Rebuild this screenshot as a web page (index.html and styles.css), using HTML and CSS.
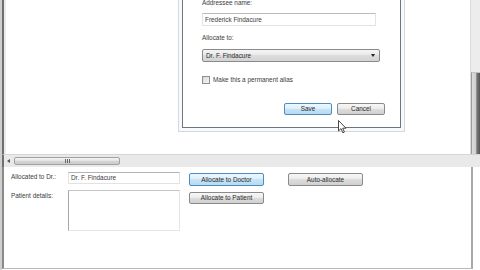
FILE: index.html
```html
<!DOCTYPE html>
<html>
<head>
<meta charset="utf-8">
<link rel="stylesheet" href="styles.css">
</head>
<body>
<div class="screen">
  <div class="upper">
    <div class="canvas"></div>
    <div class="vscroll"><div class="vthumb"></div></div>
  </div>
  <div class="hscroll">
    <span class="harrow"></span>
    <div class="hthumb"><span class="grip"></span></div>
  </div>
  <div class="lower">
    <div class="form">
      <span class="lbl">Allocated to Dr.:</span>
      <div class="field">Dr. F. Findacure</div>
      <div class="cell c1"><button class="btn default">Allocate to Doctor</button></div>
      <div class="cell c2"><button class="btn">Auto-allocate</button></div>
      <span class="lbl lbl2">Patient details:</span>
      <div class="area"></div>
      <div class="cell c1"><button class="btn btn2">Allocate to Patient</button></div>
    </div>
  </div>

  <div class="dlg-frame">
    <div class="dlg">
      <div class="dlbl first">Addressee name:</div>
      <div class="dfield">Frederick Findacure</div>
      <div class="dlbl second">Allocate to:</div>
      <div class="combo"><span>Dr. F. Findacure</span><span class="caret"></span></div>
      <div class="check"><span class="box"></span><span>Make this a permanent alias</span></div>
      <div class="dbtns">
        <button class="btn dbtn default">Save</button>
        <button class="btn dbtn">Cancel</button>
      </div>
    </div>
  </div>

  <svg class="cursor" width="10" height="14" viewBox="0 0 10 14">
    <path d="M0.5 0.5 L0.5 11 L3 8.6 L4.8 12.8 L6.4 12.1 L4.7 8.2 L8 8.2 Z" fill="#fff" stroke="#333" stroke-width="0.9" stroke-linejoin="round"/>
  </svg>
</div>
</body>
</html>
```

FILE: styles.css
```css
* { box-sizing: border-box; }
html, body { margin: 0; padding: 0; }
body {
  width: 480px;
  height: 270px;
  overflow: hidden;
  background: #fff;
  font-family: "Liberation Sans", Arial, sans-serif;
  font-size: 6.4px;
  color: #3c3c3c;
}
.screen {
  position: relative;
  width: 480px;
  height: 270px;
  display: flex;
  flex-direction: column;
  border-left: 2px solid #cfcfcf;
  overflow: hidden;
}
.upper {
  height: 154px;
  display: flex;
  border-left: 2px solid #707070;
}
.canvas {
  flex: 1;
  background: #fff;
  border-left: 2px solid #ececec;
}
.vscroll {
  width: 10px;
  background: #ededed;
  border-left: 1px solid #dadada;
  display: flex;
  flex-direction: column;
}
.vthumb {
  margin-top: 72px;
  flex: 1;
  border-left: 1px solid #9c9c9c;
  border-top: 1px solid #c4c4c4;
  background: linear-gradient(to right, #dcdcdc 0, #cfcfcf 45%, #7a7a7a 60%, #555 100%);
}
.hscroll {
  height: 13px;
  background: #e9e9e9;
  border-top: 1px solid #d6d6d6;
  border-left: 2px solid #707070;
  display: flex;
  align-items: center;
  padding-left: 3px;
}
.harrow {
  width: 0;
  height: 0;
  border-top: 2px solid transparent;
  border-bottom: 2px solid transparent;
  border-right: 3px solid #555;
}
.hthumb {
  margin-left: 4px;
  width: 106px;
  height: 8px;
  border: 1px solid #a2a2a2;
  border-radius: 2px;
  background: linear-gradient(#f4f4f4, #e2e2e2 50%, #d4d4d4 51%, #cbcbcb);
  display: flex;
  align-items: center;
  justify-content: center;
}
.grip {
  width: 5px;
  height: 4px;
  background: repeating-linear-gradient(to right, #666 0, #666 1px, transparent 1px, transparent 2px);
}
.lower {
  flex: 1;
  margin-right: 7px;
  margin-bottom: 1px;
  border-left: 2px solid #8a8a8a;
  border-right: 2px solid #a9a9a9;
  border-bottom: 1px solid #b8b8b8;
  background: #fff;
}
.form {
  display: grid;
  grid-template-columns: 57px 112px 84px 99px;
  grid-template-rows: 13px 43px;
  row-gap: 5px;
  padding-top: 5px;
  padding-left: 7px;
}
.lbl {
  line-height: 8px;
  margin-top: 1px;
  white-space: nowrap;
}
.lbl2 { margin-top: 2px; }
.field {
  height: 12px;
  border: 1px solid #e2e2e2;
  border-top-color: #b3b3b3;
  padding-left: 2px;
  line-height: 10px;
  white-space: nowrap;
}
.area {
  height: 41px;
  border: 1px solid #e6e6e6;
  border-top-color: #c6c6c6;
  border-left-color: #a6a6a6;
}
.cell.c1 { padding-left: 9px; }
.cell.c2 { padding-left: 24px; }
.btn {
  display: block;
  width: 75px;
  height: 13px;
  margin: 1px 0 0 0;
  padding: 0;
  font-family: "Liberation Sans", Arial, sans-serif;
  font-size: 6.4px;
  color: #2a2a2a;
  border: 1px solid #8a8a8a;
  border-radius: 2px;
  background: linear-gradient(#f7f7f7, #ebebeb 48%, #dddddd 50%, #d0d0d0);
  line-height: 11px;
  text-align: center;
  white-space: nowrap;
}
.btn.default {
  border-color: #4f8cbb;
  background: linear-gradient(#eef7fd, #dcefFb 48%, #c6e4f7 50%, #b5dbf3);
}
.btn2 { margin-top: 2px; height: 12px; line-height: 10px; }

.dlg-frame {
  position: absolute;
  left: 176px;
  top: -14px;
  width: 227px;
  padding: 3px;
  border: 1px solid #d2d8de;
  background: #f8f9fa;
}
.dlg {
  width: 219px;
  border: 1px solid #6c7680;
  background: #fff;
  padding: 0 15px 12px 19px;
}
.dlbl {
  line-height: 8px;
  white-space: nowrap;
}
.dlbl.first { margin-top: 8px; }
.dlbl.second { margin-top: 8px; }
.dfield {
  margin-top: 6px;
  width: 174px;
  height: 13px;
  border: 1px solid #e3e3e3;
  border-top-color: #bcbcbc;
  padding-left: 2px;
  line-height: 11px;
  white-space: nowrap;
}
.combo {
  margin-top: 7px;
  width: 178px;
  height: 13px;
  border: 1px solid #8a8a8a;
  border-radius: 2px;
  background: linear-gradient(#f5f5f5, #e9e9e9 48%, #dcdcdc 50%, #d3d3d3);
  display: flex;
  align-items: center;
  justify-content: space-between;
  padding: 0 4px 0 3px;
  color: #2a2a2a;
}
.caret {
  width: 0;
  height: 0;
  border-left: 2px solid transparent;
  border-right: 2px solid transparent;
  border-top: 3px solid #222;
}
.check {
  margin-top: 13px;
  height: 9px;
  display: flex;
  align-items: center;
  gap: 3px;
  white-space: nowrap;
}
.box {
  width: 8px;
  height: 8px;
  border: 1px solid #8e8f8f;
  background: linear-gradient(135deg, #d8d8d8, #f7f7f7);
}
.dbtns {
  margin-top: 19px;
  display: flex;
  justify-content: flex-end;
  gap: 5px;
}
.btn.dbtn {
  width: 48px;
  height: 12px;
  margin: 0;
  line-height: 10px;
}
.cursor {
  position: absolute;
  left: 336px;
  top: 120px;
}
```
